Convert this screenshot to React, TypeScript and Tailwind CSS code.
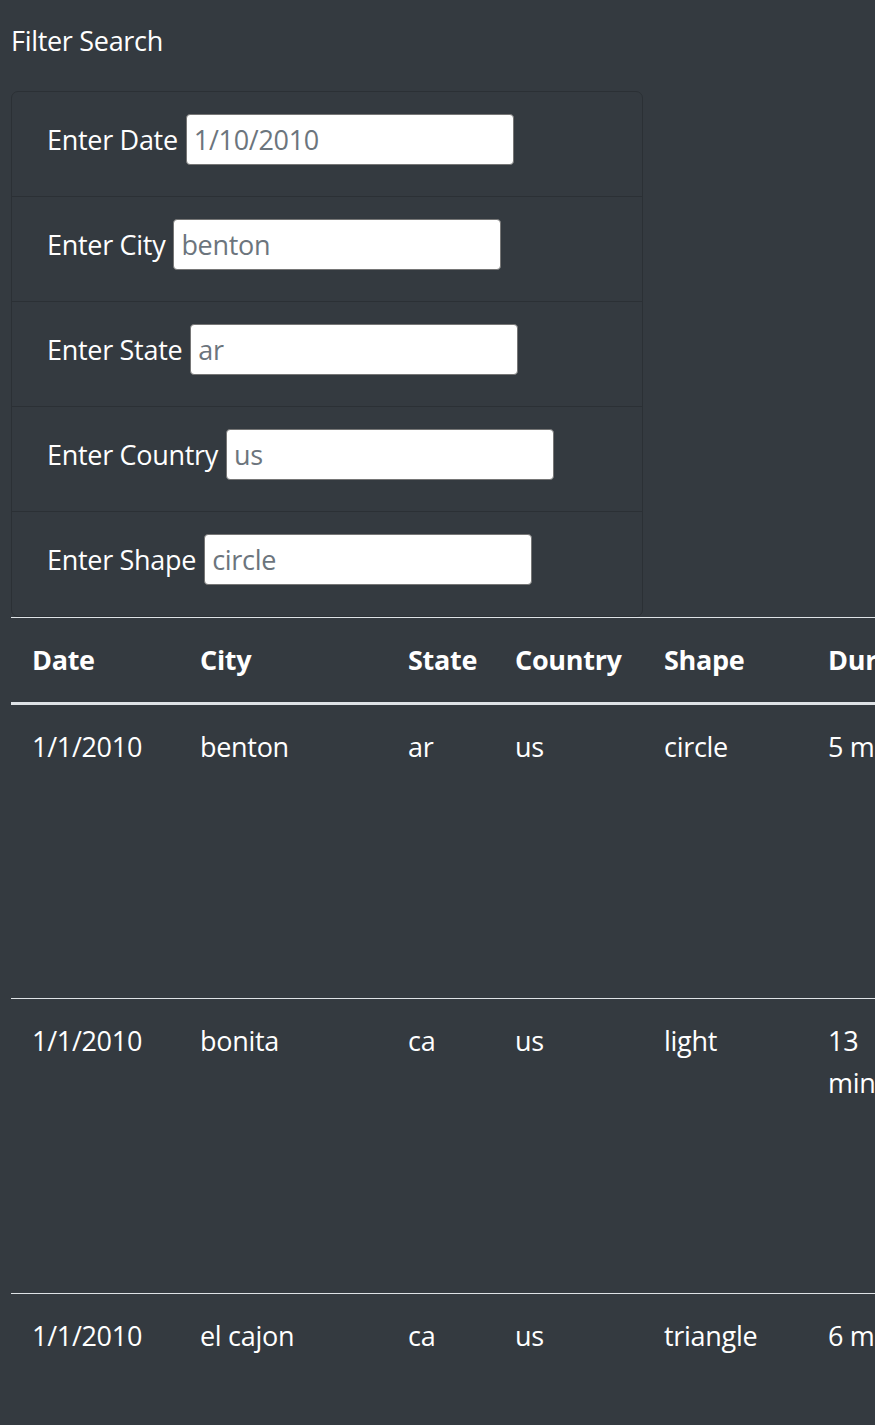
import React from "react";

const fields = [
  { label: "Enter Date", value: "1/10/2010" },
  { label: "Enter City", value: "benton" },
  { label: "Enter State", value: "ar" },
  { label: "Enter Country", value: "us" },
  { label: "Enter Shape", value: "circle" },
];

const rows = [
  {
    date: "1/1/2010",
    city: "benton",
    state: "ar",
    country: "us",
    shape: "circle",
    duration: "5 mins.",
    comments: "Orange circle moving slowly across the night sky, then vanished.",
  },
  {
    date: "1/1/2010",
    city: "bonita",
    state: "ca",
    country: "us",
    shape: "light",
    duration: "13 minutes",
    comments: "Three bright red lights hovering over the hills for a while.",
  },
  {
    date: "1/1/2010",
    city: "el cajon",
    state: "ca",
    country: "us",
    shape: "triangle",
    duration: "6 mins.",
    comments: "Triangle shaped lights hovering then moving slowly east.",
  },
];

const headers = ["Date", "City", "State", "Country", "Shape", "Duration", "Comments"];

export default function App() {
  return (
    <div className="min-h-[1425px] w-full overflow-hidden bg-[#343a40] text-white font-['Open_Sans',sans-serif] text-[27px] leading-[42px] tracking-[-0.3px]">
      <div className="pl-[11px] pt-[20px]">
        <h4 className="mb-[29px]">Filter Search</h4>
        <ul className="w-[632px] rounded-[7px] border border-[#2b3035]">
          {fields.map((f, i) => (
            <li
              key={f.label}
              className={`flex items-start px-[35px] pt-[22px] ${i > 0 ? "h-[105px] border-t border-[#2b3035]" : "h-[104px]"}`}
            >
              <div className="flex h-[51px] items-center">
                <label className="mr-[8px]">{f.label}</label>
                <input
                  readOnly
                  placeholder={f.value}
                  className="h-[51px] w-[328px] rounded-[4px] border border-[#767676] bg-white px-[7px] text-[27px] tracking-[-0.3px] text-[#6c757d] placeholder:text-[#6c757d] outline-none"
                />
              </div>
            </li>
          ))}
        </ul>
        <div className="overflow-hidden">
          <table className="w-[1600px] table-fixed border-collapse text-left">
            <colgroup>
              <col className="w-[168px]" />
              <col className="w-[208px]" />
              <col className="w-[107px]" />
              <col className="w-[149px]" />
              <col className="w-[164px]" />
              <col className="w-[150px]" />
              <col />
            </colgroup>
            <thead>
              <tr>
                {headers.map((h) => (
                  <th
                    key={h}
                    className="border-t border-b-[3px] border-t-[#dee2e6] border-b-[#dee2e6] px-[21px] py-[21px] align-bottom font-bold whitespace-nowrap"
                  >
                    {h}
                  </th>
                ))}
              </tr>
            </thead>
            <tbody>
              {rows.map((r, i) => (
                <tr key={r.city} className={i > 0 ? "border-t border-[#dee2e6]" : ""}>
                  {[r.date, r.city, r.state, r.country, r.shape, r.duration, r.comments].map((c, j) => (
                    <td key={j} className="h-[295px] px-[21px] py-[21px] align-top">
                      {c}
                    </td>
                  ))}
                </tr>
              ))}
            </tbody>
          </table>
        </div>
      </div>
    </div>
  );
}
